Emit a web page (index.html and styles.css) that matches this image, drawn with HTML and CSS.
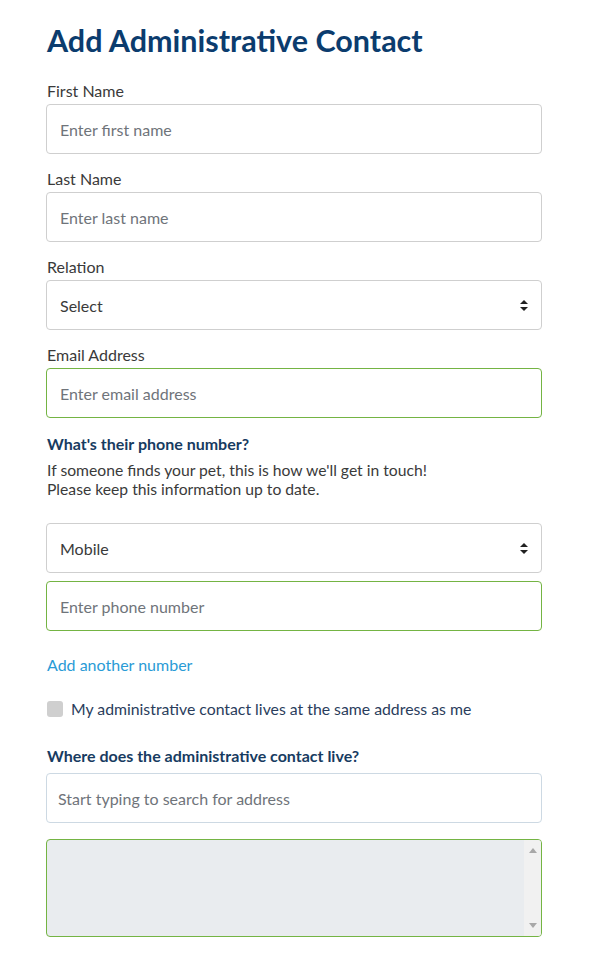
FILE: index.html
```html
<!DOCTYPE html>
<html lang="en">
<head>
<meta charset="utf-8">
<title>Add Administrative Contact</title>
<link rel="stylesheet" href="styles.css">
</head>
<body>
<form class="form">
  <h1 class="title">Add Administrative Contact</h1>

  <div class="group">
    <label class="label" for="fn">First Name</label>
    <input class="field" id="fn" type="text" placeholder="Enter first name">
  </div>

  <div class="group">
    <label class="label" for="ln">Last Name</label>
    <input class="field" id="ln" type="text" placeholder="Enter last name">
  </div>

  <div class="group">
    <label class="label" for="rel">Relation</label>
    <div class="select-wrap">
      <select class="field select" id="rel"><option>Select</option></select>
      <svg class="caret" width="8" height="11" viewBox="0 0 8 11"><path d="M4 0 L8 4 H0 Z M0 7 H8 L4 11 Z" fill="#222"/></svg>
    </div>
  </div>

  <div class="group">
    <label class="label" for="em">Email Address</label>
    <input class="field valid" id="em" type="email" placeholder="Enter email address">
  </div>

  <h2 class="subhead">What's their phone number?</h2>
  <p class="note">If someone finds your pet, this is how we'll get in touch!<br>Please keep this information up to date.</p>

  <div class="phone">
    <div class="select-wrap">
      <select class="field select"><option>Mobile</option></select>
      <svg class="caret" width="8" height="11" viewBox="0 0 8 11"><path d="M4 0 L8 4 H0 Z M0 7 H8 L4 11 Z" fill="#222"/></svg>
    </div>
    <input class="field valid" type="tel" placeholder="Enter phone number">
  </div>

  <a class="link" href="#">Add another number</a>

  <label class="check">
    <span class="box"></span>
    <span>My administrative contact lives at the same address as me</span>
  </label>

  <h2 class="subhead where">Where does the administrative contact live?</h2>
  <input class="field address" type="text" placeholder="Start typing to search for address">

  <div class="area">
    <textarea class="area-input" disabled></textarea>
    <div class="scrollbar">
      <svg width="8" height="5" viewBox="0 0 8 5"><path d="M4 0 L8 5 H0 Z" fill="#a8a8a8"/></svg>
      <svg width="8" height="5" viewBox="0 0 8 5"><path d="M0 0 H8 L4 5 Z" fill="#a8a8a8"/></svg>
    </div>
  </div>
</form>
</body>
</html>
```

FILE: styles.css
```css
* { box-sizing: border-box; }
html, body { margin: 0; padding: 0; background: #fff; }
body { font-family: Lato, "Open Sans", Arial, sans-serif; color: #333; }

.form {
  width: 496px;
  margin-left: 46px;
  padding-top: 22px;
  display: flex;
  flex-direction: column;
}

.title {
  margin: 0 0 22px 1px;
  font-size: 30.5px;
  line-height: 36px;
  font-weight: 700;
  color: #0b3c6e;
}

.group { display: flex; flex-direction: column; margin-bottom: 14px; }
.group:nth-of-type(4) { margin-bottom: 15px; }

.label {
  font-size: 16px;
  line-height: 22px;
  margin: 0 0 2px 1px;
  color: #3a3a3a;
}

.field {
  width: 496px;
  height: 50px;
  border: 1px solid #cfcfcf;
  border-radius: 4px;
  padding: 0 13px;
  font-family: inherit;
  font-size: 16px;
  color: #3a3a3a;
  background: #fff;
  outline: none;
}
.field::placeholder { color: #6f747a; opacity: 1; }
.field.valid { border-color: #74b443; }

.select-wrap { position: relative; }
.select { appearance: none; -webkit-appearance: none; display: block; }
.caret { position: absolute; right: 14px; top: 20px; pointer-events: none; }

.subhead {
  margin: 0 0 6px 1px;
  font-size: 16px;
  line-height: 22px;
  font-weight: 700;
  color: #173b61;
}

.note {
  margin: 0 0 24px 1px;
  font-size: 15.7px;
  line-height: 19px;
  color: #3a3a3a;
}

.phone { display: flex; flex-direction: column; gap: 8px; margin-bottom: 23px; }

.link {
  font-size: 16px;
  line-height: 22px;
  color: #2a9bd6;
  text-decoration: none;
  margin-left: 1px;
  align-self: flex-start;
  margin-bottom: 22px;
}

.check {
  display: flex;
  align-items: center;
  gap: 8px;
  font-size: 15.8px;
  line-height: 22px;
  color: #2a3d5c;
  margin-left: 1px;
  margin-bottom: 25px;
}
.check .box {
  width: 16px;
  height: 16px;
  border-radius: 3px;
  background: #cfcfcf;
  flex: none;
}

.where { margin-bottom: 6px; }

.field.address { border-color: #cdd9e3; padding: 0 11px; }

.area {
  margin-top: 16px;
  width: 496px;
  height: 98px;
  border: 1px solid #74b443;
  border-radius: 4px;
  background: #e9ecef;
  display: flex;
  overflow: hidden;
}
.area-input {
  flex: 1;
  border: 0;
  background: transparent;
  resize: none;
  outline: none;
}
.scrollbar {
  width: 17px;
  background: #f1f1f1;
  display: flex;
  flex-direction: column;
  justify-content: space-between;
  align-items: center;
  padding: 8px 0 8px;
}
```
